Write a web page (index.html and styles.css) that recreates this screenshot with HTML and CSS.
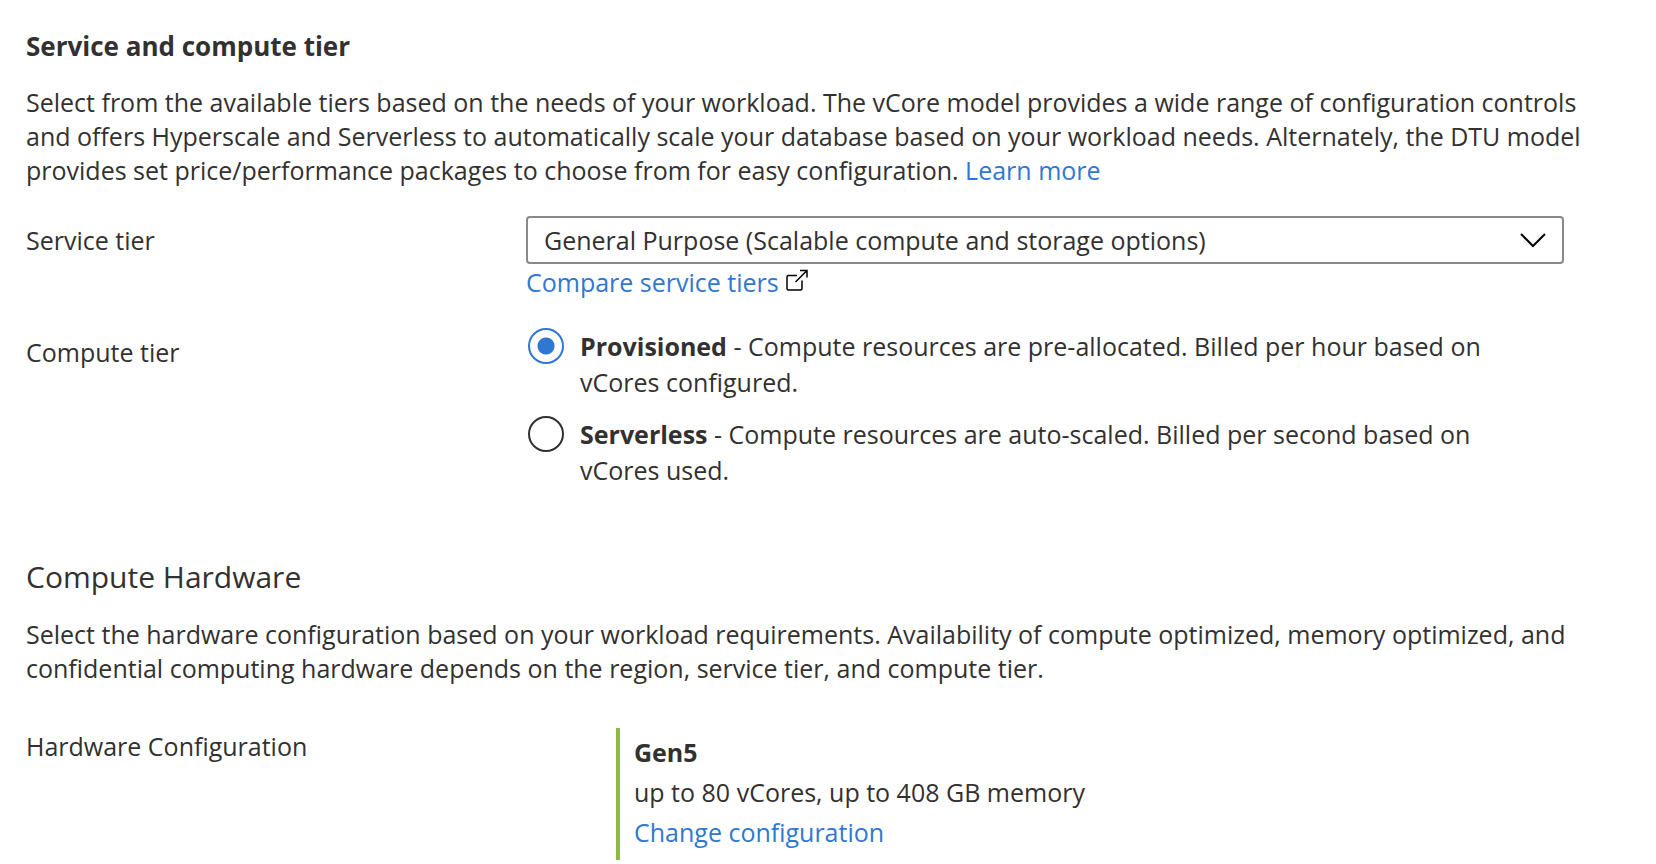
FILE: index.html
```html
<!DOCTYPE html>
<html lang="en">
    <head>
        <meta charset="UTF-8" />
        <meta name="viewport" content="width=device-width, initial-scale=1.0" />
        <title>Configure</title>
        <link rel="stylesheet" href="styles.css">
    </head>
    <body>
        <main>
            <section class="service">
                <h1>Service and compute tier</h1>
                <p class="intro">
                    Select from the available tiers based on the needs of your workload. The vCore model provides a wide range of configuration controls
                    and offers Hyperscale and Serverless to automatically scale your database based on your workload needs. Alternately, the DTU model
                    provides set price/performance packages to choose from for easy configuration. <a href="#">Learn more</a>
                </p>
                <div class="row">
                    <label class="name" for="service-tier">Service tier</label>
                    <div class="field">
                        <div class="dropdown">
                            <select id="service-tier" name="service-tier">
                                <option selected>General Purpose (Scalable compute and storage options)</option>
                            </select>
                            <svg class="chevron" viewBox="0 0 26 16" fill="none" stroke="#000" stroke-width="2">
                                <path d="M1 2l12 12 12-12" />
                            </svg>
                        </div>
                        <a class="compare" href="#">Compare service tiers
                            <svg class="external" viewBox="0 0 24 24" fill="none" stroke="#000" stroke-width="1.5">
                                <path d="M12 7.5H3.5A1.5 1.5 0 0 0 2 9v11.5A1.5 1.5 0 0 0 3.5 22h12a1.5 1.5 0 0 0 1.5-1.5v-8" />
                                <path d="M10.5 14L22 2.5M15 2.5h7v7" />
                            </svg>
                        </a>
                    </div>
                </div>
                <div class="row" role="radiogroup" aria-labelledby="compute-tier">
                    <span class="name" id="compute-tier">Compute tier</span>
                    <div class="options">
                        <label class="option" for="provisioned">
                            <input type="radio" id="provisioned" name="compute-tier" checked />
                            <span><b>Provisioned</b> - Compute resources are pre-allocated. Billed per hour based on vCores configured.</span>
                        </label>
                        <label class="option" for="serverless">
                            <input type="radio" id="serverless" name="compute-tier" />
                            <span><b>Serverless</b> - Compute resources are auto-scaled. Billed per second based on vCores used.</span>
                        </label>
                    </div>
                </div>
            </section>
            <section class="hardware">
                <h2>Compute Hardware</h2>
                <p class="intro">
                    Select the hardware configuration based on your workload requirements. Availability of compute optimized, memory optimized, and
                    confidential computing hardware depends on the region, service tier, and compute tier.
                </p>
                <div class="row wide">
                    <span class="name">Hardware Configuration</span>
                    <div class="config">
                        <b>Gen5</b>
                        <span>up to 80 vCores, up to 408 GB memory</span>
                        <a href="#">Change configuration</a>
                    </div>
                </div>
            </section>
        </main>
    </body>
</html>
```
FILE: styles.css
```css
:root {
    --text: #323130;
    --link: #2f78d2;
    --border: #8a8888;
}
* {
    box-sizing: border-box;
}
body {
    margin: 0;
    background-color: white;
    color: var(--text);
    font-family: "Segoe UI", "Open Sans", sans-serif;
    font-size: 25px;
    line-height: 34px;
}
main {
    padding: 29px 72px 4px 26px;
}
h1 {
    margin: 0 0 22px 0;
    font-size: 26px;
    font-weight: 700;
}
h2 {
    margin: 0 0 20px 0;
    font-size: 30px;
    font-weight: 400;
    line-height: 40px;
}
a {
    color: var(--link);
    text-decoration: none;
}
b {
    font-weight: 700;
}
.intro {
    margin: 0;
}
.row {
    display: grid;
    grid-template-columns: 500px 1fr;
    margin: 29px 20px 0 0;
}
.row.wide {
    grid-template-columns: 590px 1fr;
    margin-top: 43px;
}
.name {
    padding-top: 7px;
}
.wide .name {
    padding-top: 1px;
}
.dropdown {
    display: grid;
    align-items: center;
}
.dropdown > * {
    grid-area: 1 / 1;
}
select {
    width: 100%;
    height: 48px;
    padding: 0 60px 0 16px;
    color: inherit;
    font: inherit;
    background-color: white;
    border: 2px solid var(--border);
    border-radius: 4px;
    -webkit-appearance: none;
    appearance: none;
}
.chevron {
    justify-self: end;
    width: 26px;
    height: 16px;
    margin-right: 18px;
    pointer-events: none;
}
.compare {
    display: flex;
    align-items: center;
    gap: 6px;
    margin-top: 1px;
}
.external {
    width: 24px;
    height: 24px;
    margin-bottom: 4px;
}
.options {
    display: grid;
    gap: 16px;
    padding-right: 60px;
}
.option {
    display: flex;
    gap: 16px;
    line-height: 36px;
}
input[type="radio"] {
    flex: none;
    width: 36px;
    height: 36px;
    margin: 0 0 0 2px;
    border: 2px solid var(--text);
    border-radius: 50%;
    -webkit-appearance: none;
    appearance: none;
}
input[type="radio"]:checked {
    border-color: var(--link);
    background: radial-gradient(circle, var(--link) 8px, transparent 9px);
}
.hardware {
    margin-top: 69px;
}
.config {
    display: flex;
    flex-direction: column;
    align-items: flex-start;
    padding: 4px 0 8px 14px;
    border-left: 4px solid #8cba3c;
    line-height: 40px;
}
```
